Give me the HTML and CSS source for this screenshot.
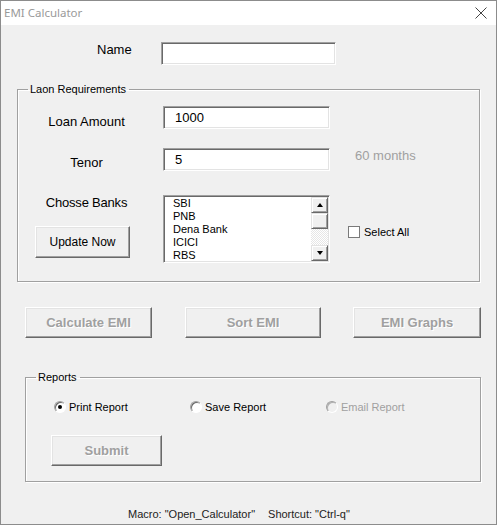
FILE: index.html
```html
<!DOCTYPE html>
<html>
<head>
<meta charset="utf-8">
<link rel="stylesheet" href="styles.css">
</head>
<body>
<div class="window">
  <div class="titlebar">
    <span class="title">EMI Calculator</span>
    <svg class="close" width="12" height="12" viewBox="0 0 12 12"><path d="M0.5 0.5 L11.5 11.5 M11.5 0.5 L0.5 11.5" stroke="#444" stroke-width="1" fill="none"/></svg>
  </div>
  <div class="body">
    <div class="name-row">
      <span class="name-label">Name</span>
      <div class="textbox name-box"></div>
    </div>

    <fieldset class="group req">
      <legend>Laon Requirements</legend>
      <div class="row row-loan">
        <div class="lbl-col"><span class="lbl lbl-loan">Loan Amount</span></div>
        <div class="textbox field">1000</div>
      </div>
      <div class="row row-tenor">
        <div class="lbl-col"><span class="lbl lbl-tenor">Tenor</span></div>
        <div class="textbox field">5</div>
        <span class="hint">60 months</span>
      </div>
      <div class="row row-banks">
        <div class="lbl-col">
          <span class="lbl lbl-banks">Chosse Banks</span>
          <button class="btn update">Update Now</button>
        </div>
        <div class="listbox">
          <ul class="items">
            <li>SBI</li>
            <li>PNB</li>
            <li>Dena Bank</li>
            <li>ICICI</li>
            <li>RBS</li>
          </ul>
          <div class="scrollbar">
            <div class="sb-btn"><span class="arrow up"></span></div>
            <div class="sb-thumb"></div>
            <div class="sb-track"></div>
            <div class="sb-btn"><span class="arrow down"></span></div>
          </div>
        </div>
        <label class="check"><span class="box"></span><span>Select All</span></label>
      </div>
    </fieldset>

    <div class="actions">
      <button class="btn disabled calc">Calculate EMI</button>
      <button class="btn disabled sort">Sort EMI</button>
      <button class="btn disabled graphs">EMI Graphs</button>
    </div>

    <fieldset class="group reports">
      <legend>Reports</legend>
      <div class="radios">
        <span class="radio-item"><span class="radio checked"></span><span>Print Report</span></span>
        <span class="radio-item"><span class="radio"></span><span>Save Report</span></span>
        <span class="radio-item off"><span class="radio"></span><span>Email Report</span></span>
      </div>
      <button class="btn disabled submit">Submit</button>
    </fieldset>

    <div class="footer"><span>Macro: "Open_Calculator"</span><span class="shortcut">Shortcut: "Ctrl-q"</span></div>
  </div>
</div>
</body>
</html>
```

FILE: styles.css
```css
* { box-sizing: border-box; }
html, body { margin: 0; padding: 0; background: #f0f0f0; }
body { font-family: "Liberation Sans", Arial, sans-serif; color: #000; }

.window {
  width: 497px;
  height: 525px;
  border: 1px solid #8c8c8c;
  display: flex;
  flex-direction: column;
  background: #f0f0f0;
}

.titlebar {
  height: 24px;
  flex: none;
  background: #fff;
  display: flex;
  align-items: center;
  padding-left: 3px;
  padding-right: 9px;
}
.title {
  font-family: "Noto Sans", sans-serif;
  font-size: 11.5px;
  color: #9a9a9a;
  flex: 1;
  margin-top: -1px;
}
.close { display: block; }

.body { flex: 1; }

/* sunken field */
.textbox {
  background: #fff;
  border: 1px solid;
  border-color: #a0a0a0 #ffffff #ffffff #a0a0a0;
  box-shadow: inset 1px 1px 0 #696969, inset -1px -1px 0 #e3e3e3;
  font-size: 13px;
  line-height: 21px;
  padding-left: 11px;
}

.name-row {
  display: flex;
  align-items: flex-start;
  margin-top: 17px;
  padding-left: 96px;
}
.name-label {
  width: 64px;
  font-size: 13px;
  line-height: 16px;
}
.name-box { width: 175px; height: 23px; }

.group {
  margin: 0;
  padding: 0;
  border: 1px solid #a0a0a0;
  box-shadow: 1px 1px 0 #fff, inset 1px 1px 0 #fff;
  min-width: 0;
}
.group legend {
  font-size: 11px;
  line-height: 14px;
  padding: 0 3px 0 2px;
  margin-left: 10px;
}

.req {
  margin-top: 17px;
  margin-left: 16px;
  width: 463px;
  padding-bottom: 18px;
}

.row { display: flex; align-items: flex-start; }
.row-loan { margin-top: 10px; }
.row-tenor { margin-top: 18px; }
.row-banks { margin-top: 24px; }

.lbl-col {
  width: 145px;
  display: flex;
  flex-direction: column;
  align-items: center;
  padding-right: 8px;
}
.lbl { font-size: 13px; line-height: 16px; }
.lbl-loan { padding-top: 8px; }
.lbl-tenor { padding-top: 7px; }
.lbl-banks { letter-spacing: -0.2px; }

.field { width: 167px; height: 23px; }

.hint {
  margin-left: 25px;
  font-size: 13px;
  line-height: 16px;
  color: #a0a0a0;
}

/* buttons */
.btn {
  font-family: "Liberation Sans", Arial, sans-serif;
  background: #f0f0f0;
  border: 1px solid;
  border-color: #ffffff #696969 #696969 #ffffff;
  box-shadow: inset -1px -1px 0 #a0a0a0, inset 1px 1px 0 #e3e3e3;
  padding: 0;
  margin: 0;
  color: #000;
  font-size: 12px;
}
.btn.disabled {
  color: #a0a0a0;
  font-weight: bold;
  font-size: 13px;
  text-shadow: 1px 1px 0 #fff;
}
.update {
  align-self: flex-start;
  margin-left: 17px;
  margin-top: 15px;
  width: 95px;
  height: 32px;
}

/* listbox */
.listbox {
  width: 167px;
  height: 68px;
  background: #fff;
  border: 1px solid;
  border-color: #a0a0a0 #ffffff #ffffff #a0a0a0;
  box-shadow: inset 1px 1px 0 #696969, inset -1px -1px 0 #e3e3e3;
  padding: 1px;
  display: flex;
}
.items {
  list-style: none;
  margin: 0;
  padding: 0 0 0 8px;
  flex: 1;
  overflow: hidden;
  font-size: 11px;
  line-height: 13px;
  height: 64px;
}
.scrollbar {
  width: 17px;
  height: 64px;
  display: flex;
  flex-direction: column;
}
.sb-btn, .sb-thumb {
  height: 16px;
  background: #f0f0f0;
  border: 1px solid;
  border-color: #e3e3e3 #696969 #696969 #e3e3e3;
  box-shadow: inset 1px 1px 0 #fff, inset -1px -1px 0 #a0a0a0;
  display: flex;
  align-items: center;
  justify-content: center;
}
.sb-track {
  height: 16px;
  background: repeating-conic-gradient(#ffffff 0 25%, #e6e6e6 0 50%) 0 0 / 2px 2px;
}
.arrow { width: 0; height: 0; border-left: 3px solid transparent; border-right: 3px solid transparent; }
.arrow.up { border-bottom: 4px solid #000; }
.arrow.down { border-top: 4px solid #000; }

.check {
  display: flex;
  align-items: center;
  margin-left: 18px;
  margin-top: 30px;
  font-size: 11px;
  line-height: 14px;
}
.check .box {
  width: 12px;
  height: 12px;
  background: #fff;
  border: 1px solid #7a7a7a;
  margin-right: 4px;
}

/* actions */
.actions {
  display: flex;
  margin-top: 25px;
  margin-left: 24px;
}
.actions .btn { height: 31px; }
.calc { width: 127px; }
.sort { width: 136px; margin-left: 33px; }
.graphs { width: 128px; margin-left: 32px; }

/* reports */
.reports {
  margin-top: 32px;
  margin-left: 24px;
  width: 456px;
  padding-bottom: 15px;
}
.radios {
  display: flex;
  margin-top: 15px;
  padding-left: 28px;
  font-size: 11px;
  line-height: 16px;
}
.radio-item { display: flex; align-items: center; width: 136px; }
.radio-item.off { color: #a0a0a0; }
.radio {
  width: 12px;
  height: 12px;
  border-radius: 50%;
  background: #fff;
  border: 1px solid;
  border-color: #a0a0a0 #ffffff #ffffff #a0a0a0;
  box-shadow: inset 1px 1px 0 #696969;
  margin-right: 3px;
  display: flex;
  align-items: center;
  justify-content: center;
}
.radio.checked::after {
  content: "";
  width: 4px;
  height: 4px;
  border-radius: 50%;
  background: #000;
}
.off .radio { background: #f0f0f0; box-shadow: inset 1px 1px 0 #b0b0b0; }
.submit {
  display: block;
  margin-top: 20px;
  margin-left: 25px;
  width: 111px;
  height: 31px;
}

.footer {
  margin-top: 25px;
  padding-left: 127px;
  font-size: 11px;
  line-height: 14px;
  color: #222;
}
.shortcut { margin-left: 13px; }
```
